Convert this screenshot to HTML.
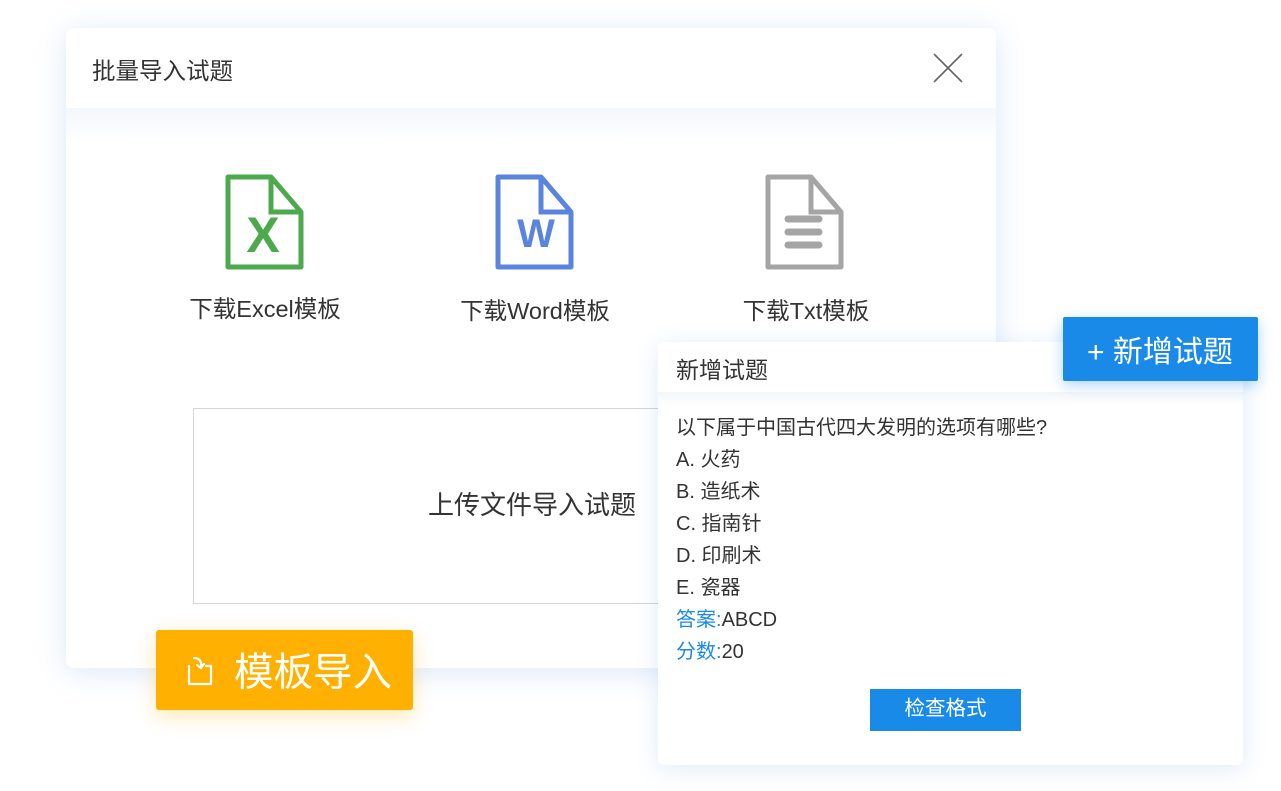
<!DOCTYPE html><html><head><meta charset="utf-8"><style>
body{margin:0;width:1281px;height:791px;background:#fff;position:relative;overflow:hidden;font-family:"Liberation Sans","Noto Sans CJK SC",sans-serif;color:#333}
.a{position:absolute}
.card{left:66px;top:28px;width:930px;height:640px;background:#fff;border-radius:8px;box-shadow:0 4px 30px rgba(60,130,220,.18)}
.lbl{font-size:23.5px;color:#333;width:260px;text-align:center}
.ln{left:676px;font-size:20px;color:#333}
.b{color:#1a8ae8}
</style></head><body>
<div class="a card"></div>
<div class="a" style="left:66px;top:108px;width:930px;height:36px;background:linear-gradient(#f4f7fb,#fff)"></div>
<div class="a" style="left:92px;top:52px;font-size:23.5px;color:#333">批量导入试题</div>
<svg class="a" style="left:932px;top:52px" width="32" height="32"><path d="M2 2L30 30M30 2L2 30" stroke="#666" stroke-width="1.6"/></svg>
<svg class="a" style="left:224px;top:174px" width="82" height="98"><path d="M4 3H47L77 38V93H4Z" fill="none" stroke="#4caa4c" stroke-width="5" stroke-linejoin="round"/><path d="M47 3V38H77" fill="none" stroke="#4caa4c" stroke-width="5"/><text x="39" y="78" text-anchor="middle" font-family="Liberation Sans" font-weight="bold" font-size="50" fill="#4caa4c">X</text></svg>
<svg class="a" style="left:494px;top:174px" width="82" height="98"><path d="M4 3H47L77 38V93H4Z" fill="none" stroke="#5b84de" stroke-width="5" stroke-linejoin="round"/><path d="M47 3V38H77" fill="none" stroke="#5b84de" stroke-width="5"/><text x="42" y="73" text-anchor="middle" font-family="Liberation Sans" font-weight="bold" font-size="40" fill="#5b84de">W</text></svg>
<svg class="a" style="left:764px;top:174px" width="82" height="98"><path d="M4 3H47L77 38V93H4Z" fill="none" stroke="#a5a5a5" stroke-width="5" stroke-linejoin="round"/><path d="M47 3V38H77" fill="none" stroke="#a5a5a5" stroke-width="5"/><path d="M24 45H55M24 58H55M24 71H55" stroke="#a5a5a5" stroke-width="7" stroke-linecap="round"/></svg>
<div class="a lbl" style="left:135px;top:290px">下载Excel模板</div>
<div class="a lbl" style="left:405px;top:292px">下载Word模板</div>
<div class="a lbl" style="left:676px;top:292px">下载Txt模板</div>
<div class="a" style="left:193px;top:408px;width:560px;height:194px;border:1px solid #d4d4d4"></div>
<div class="a" style="left:428px;top:485px;font-size:26px;color:#333">上传文件导入试题</div>
<div class="a" style="left:156px;top:630px;width:257px;height:80px;background:#ffb000;border-radius:3px;box-shadow:0 6px 20px rgba(255,176,0,.3)"></div>
<svg class="a" style="left:184px;top:654px" width="34" height="34"><path d="M5 12V30H27V12H22M10 4C16 4 18 8 17 14L13 11M17 14L20 10" fill="none" stroke="#fff" stroke-width="2.2" stroke-linecap="round" stroke-linejoin="round"/></svg>
<div class="a" style="left:234px;top:641px;font-size:39.5px;color:#fff">模板导入</div>
<div class="a" style="left:658px;top:342px;width:585px;height:423px;background:#fff;border-radius:6px;box-shadow:0 4px 24px rgba(60,130,220,.16)"></div>
<div class="a" style="left:658px;top:392px;width:585px;height:14px;background:linear-gradient(#f3f6fa,#fff)"></div>
<div class="a" style="left:676px;top:351px;font-size:23px;color:#333">新增试题</div>
<div class="a" style="left:1063px;top:317px;width:195px;height:64px;background:#1a8ae8;border-radius:2px;box-shadow:0 4px 14px rgba(26,138,232,.35)"></div>
<div class="a" style="left:1087px;top:327px;font-size:30px;color:#fff">+ 新增试题</div>
<div class="a ln" style="top:411px">以下属于中国古代四大发明的选项有哪些?</div>
<div class="a ln" style="top:443px">A. 火药</div>
<div class="a ln" style="top:475px">B. 造纸术</div>
<div class="a ln" style="top:507px">C. 指南针</div>
<div class="a ln" style="top:539px">D. 印刷术</div>
<div class="a ln" style="top:571px">E. 瓷器</div>
<div class="a ln" style="top:603px"><span class="b">答案:</span>ABCD</div>
<div class="a ln" style="top:635px"><span class="b">分数:</span>20</div>
<div class="a" style="left:870px;top:689px;width:151px;height:42px;background:#1a8ae8;color:#fff;font-size:20.5px;text-align:center;line-height:40px">检查格式</div>
</body></html>
